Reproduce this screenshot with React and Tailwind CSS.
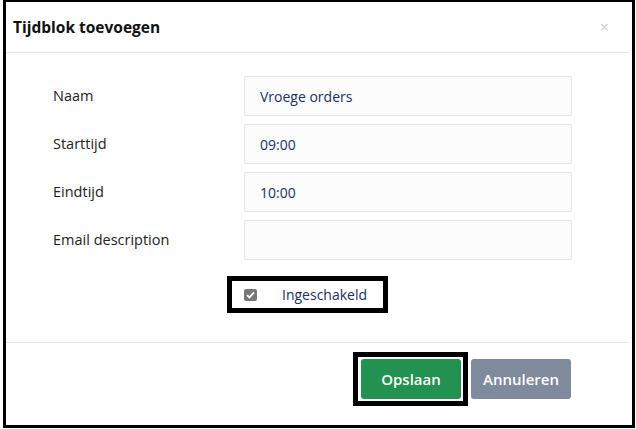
import React from 'react';

// --- Form row ---
function FieldRow({ label, value }) {
  return (
    <div className="flex items-center h-[40px]">
      <label className="w-[191px] text-[14.5px] text-[#222]">{label}</label>
      <div className="w-[328px] h-[40px] border border-[#e4e4ec] bg-[#fcfcfd] rounded-[2px] flex items-center px-[15px] text-[14px] text-[#1b2f63]">
        {value}
      </div>
    </div>
  );
}

export default function App() {
  return (
    <div
      className="w-[636px] h-[429px] bg-white pl-[3px]"
      style={{ fontFamily: '"Open Sans", "Noto Sans", sans-serif' }}
    >
      <div className="w-[632px] h-[428px] border-l-[3px] border-r-[3px] border-t-2 border-b-[3px] border-black flex flex-col">
        {/* Header */}
        <div className="h-[51px] flex items-center justify-between pl-[7px] pr-[20px] border-b border-[#e6e6e9] mr-[3px]">
          <h2 className="text-[15.5px] font-bold text-[#111] mt-[1px]">Tijdblok toevoegen</h2>
          <span className="text-[16px] text-[#c8cbd6] leading-none">×</span>
        </div>

        {/* Body */}
        <div className="flex flex-col gap-[8px] pt-[23px] pl-[47px]">
          <FieldRow label="Naam" value="Vroege orders" />
          <FieldRow label="Starttijd" value="09:00" />
          <FieldRow label="Eindtijd" value="10:00" />
          <FieldRow label="Email description" value="" />
        </div>

        {/* Enabled checkbox */}
        <div className="pl-[221px] pt-[16px]">
          <div className="w-[161px] h-[37px] border-[5px] border-black flex items-center pl-[12px]">
            <span className="w-[13px] h-[12px] rounded-[2px] bg-[#777] flex items-center justify-center">
              <svg width="9" height="8" viewBox="0 0 9 8">
                <path d="M1 4.2 L3.4 6.4 L8 1.4" stroke="#fff" strokeWidth="1.8" fill="none" />
              </svg>
            </span>
            <span className="ml-[25px] text-[14px] text-[#1b2f63]">Ingeschakeld</span>
          </div>
        </div>

        {/* Footer */}
        <div className="mt-[29px] border-t border-[#e6e6e9] mr-[3px] flex justify-end items-start pt-[9px] pr-[58px] gap-[3px]">
          <div className="border-[5px] border-black p-[2px] pl-[3px]">
            <button className="w-[100px] h-[40px] rounded-[3px] bg-[#239150] text-white text-[15px] font-semibold">
              Opslaan
            </button>
          </div>
          <button className="mt-[7px] w-[100px] h-[40px] rounded-[3px] bg-[#808a9d] text-white text-[15px] font-semibold">
            Annuleren
          </button>
        </div>
      </div>
    </div>
  );
}
